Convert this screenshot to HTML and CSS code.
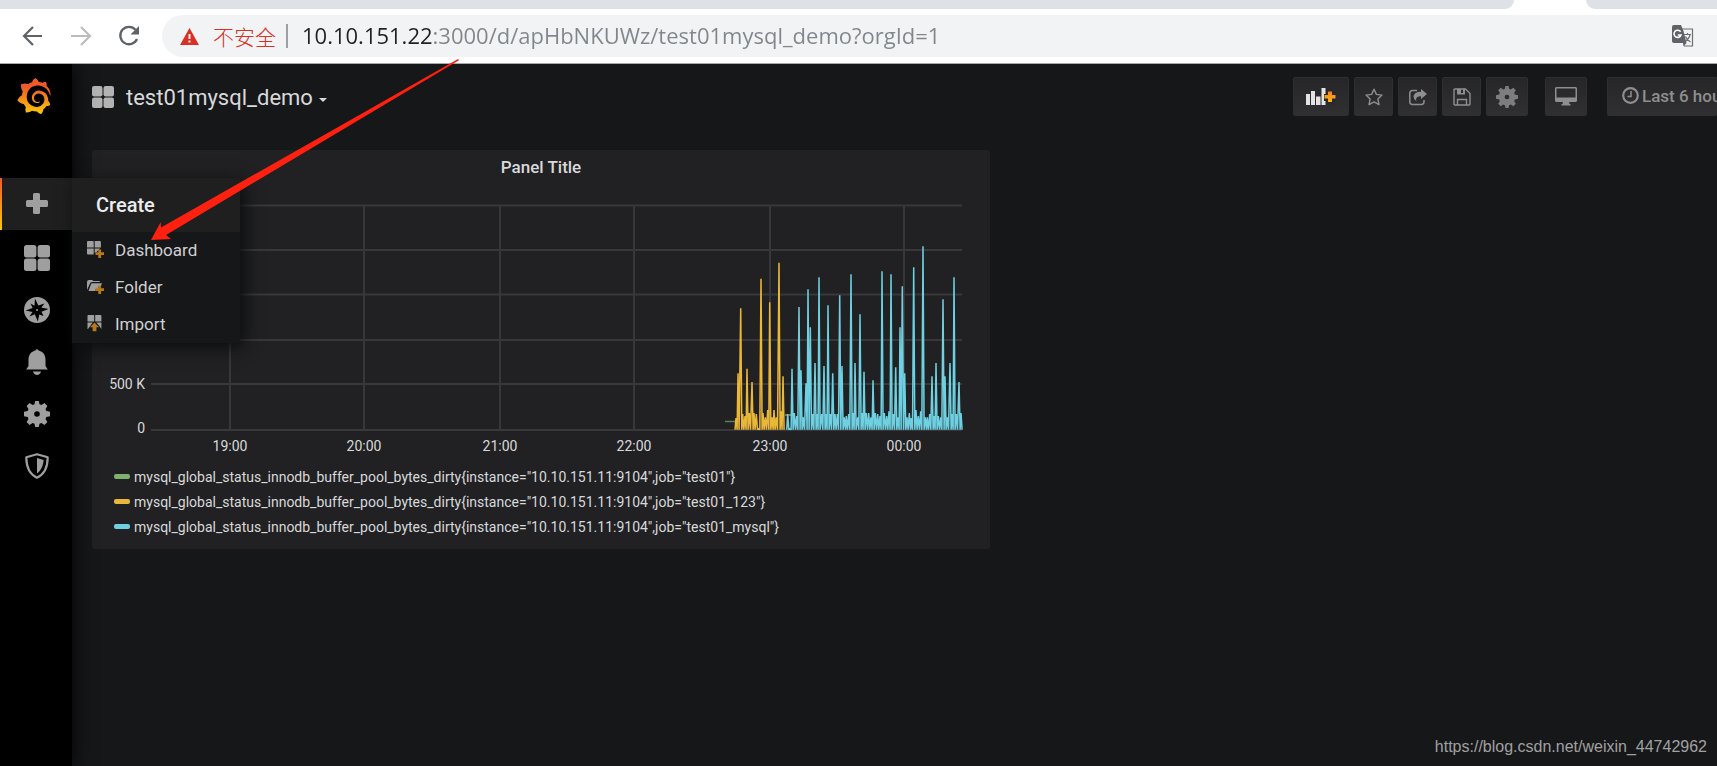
FILE: index.html
```html
<!DOCTYPE html>
<html lang="en">
<head>
<meta charset="utf-8">
<title>test01mysql_demo - Grafana</title>
<link rel="stylesheet" href="styles.css">
</head>
<body>
<svg class="defs" width="0" height="0" aria-hidden="true">
  <defs>
    <linearGradient id="sun" x1="0" y1="0" x2="0" y2="1"><stop offset="0" stop-color="#f05a28"/><stop offset="0.25" stop-color="#f05a28"/><stop offset="1" stop-color="#fbca0a"/></linearGradient>
    <linearGradient id="plus" x1="0" y1="0" x2="0" y2="1"><stop offset="0" stop-color="#f58220"/><stop offset="1" stop-color="#f9b715"/></linearGradient>
    <symbol id="tiles" viewBox="0 0 26 26"><rect width="12.4" height="12.4" rx="2.5"/><rect x="13.6" width="12.4" height="12.4" rx="2.5"/><rect y="13.6" width="12.4" height="12.4" rx="2.5"/><rect x="13.6" y="13.6" width="12.4" height="12.4" rx="2.5"/></symbol>
    <symbol id="gear" viewBox="0 0 26 26"><path fill-rule="evenodd" d="M11.2 0h3.6l.7 3.3 1.9.8 3.1-2 2.9 2.9-1.9 3 .8 2 3.7.8v4.4l-3.7.8-.8 2 1.9 3-2.9 2.9-3.1-2-1.9.8-.7 3.3h-3.6l-.7-3.3-1.9-.8-3.1 2L2.600 21l1.900-3-.8-2L0 15.200v-4.400l3.700-.8.8-2-1.900-3 2.900-2.900 3.100 2 1.900-.8zM13 10.200a2.800 2.800 0 1 0 0 5.600 2.800 2.800 0 0 0 0-5.600z"/></symbol>
  </defs>
</svg>

<header class="browser">
  <div class="tabs"><span class="tab-left"></span><span class="tab-active"></span><span class="tab-right"></span></div>
  <div class="address-row">
    <button class="nav-btn" aria-label="Back"><svg width="22" height="22" viewBox="0 0 22 22"><path d="M20 11H2.500M11 2l-9 9 9 9" fill="none" stroke="#5f6368" stroke-width="2.200"/></svg></button>
    <button class="nav-btn" aria-label="Forward"><svg width="22" height="22" viewBox="0 0 22 22"><path d="M1 11h18.500M11 2l9 9-9 9" fill="none" stroke="#babcbe" stroke-width="2.200"/></svg></button>
    <button class="nav-btn" aria-label="Reload"><svg width="22" height="22" viewBox="0 0 22 22"><path d="M17.600 4.800A8.700 8.700 0 1 0 19 14" fill="none" stroke="#5f6368" stroke-width="2.300"/><path d="M21 1v8.500h-8.500z" fill="#5f6368"/></svg></button>
    <div class="omnibox">
      <svg class="warn" width="19" height="17" viewBox="0 0 19 17"><path d="M9.500 0 19 17H0z" fill="#d93025"/><path d="M8.500 6h2v5h-2zM8.500 12.500h2v2h-2z" fill="#f1f3f4"/></svg>
      <span class="insecure" lang="zh">不安全</span>
      <span class="divider"></span>
      <input class="url" type="text" aria-label="Address" value="10.10.151.22:3000/d/apHbNKUWz/test01mysql_demo?orgId=1">
      <button class="translate" aria-label="Translate"><svg width="22" height="22" viewBox="0 0 22 22"><path d="M9 4h11.500v17H12" fill="#f1f3f4" stroke="#6b6f73" stroke-width="1.200"/><path d="M2 0h7l2.500 6 3 12H2q-2 0-2-2V2q0-2 2-2z" fill="#5f6368"/><path d="m11 18 3.500 0-3 3.500z" fill="#5f6368"/><path d="M8.600 6.800A3.600 3.600 0 1 0 9 10H5.800" fill="none" stroke="#fff" stroke-width="1.600"/><path d="M12 9.500h7M15.500 8v1.500M18 10q-1 4-5.500 7M13.500 11.500q1 3 5 5.500" fill="none" stroke="#6b6f73" stroke-width="1.200"/></svg></button>
    </div>
  </div>
</header>

<div class="app">
  <nav class="sidebar" aria-label="Main">
    <a class="logo" href="#" aria-label="Home"><svg width="36" height="36" viewBox="0 0 24 24"><path fill="url(#sun)" d="M23.02 10.59a8.578 8.578 0 0 0-.862-3.034 8.911 8.911 0 0 0-1.789-2.445c.337-1.342-.413-2.505-.413-2.505-1.292-.08-2.113.4-2.416.62-.052-.02-.102-.044-.154-.064-.22-.089-.446-.172-.677-.247-.231-.073-.47-.14-.711-.197a9.867 9.867 0 0 0-.875-.161C14.557.753 12.94 0 12.94 0c-1.804 1.145-2.147 2.744-2.147 2.744l-.018.093c-.098.029-.2.057-.298.088-.138.042-.275.094-.413.143-.138.055-.275.107-.41.166a8.869 8.869 0 0 0-1.557.87l-.063-.029c-2.497-.955-4.716.195-4.716.195-.203 2.658.996 4.33 1.235 4.636a11.608 11.608 0 0 0-.607 2.635C1.636 12.677.953 15.014.953 15.014c1.926 2.214 4.171 2.351 4.171 2.351.003-.002.006-.002.006-.005.285.509.615.994.986 1.446.156.19.32.371.488.548-.704 2.009.099 3.68.099 3.68 2.144.08 3.553-.937 3.849-1.173a9.784 9.784 0 0 0 3.164.501h.08l.055-.003.107-.002.103-.005.003.002c1.01 1.44 2.788 1.646 2.788 1.646 1.264-1.332 1.337-2.653 1.337-2.94v-.058c0-.02-.003-.039-.003-.06.265-.187.52-.387.758-.6a7.875 7.875 0 0 0 1.415-1.7c1.43.083 2.437-.885 2.437-.885-.236-1.49-1.085-2.216-1.264-2.354l-.018-.013-.016-.013a.217.217 0 0 1-.031-.02c.008-.092.016-.18.02-.27.011-.162.016-.323.016-.48v-.253l-.005-.098-.008-.135a1.891 1.891 0 0 0-.01-.13c-.003-.042-.008-.083-.013-.125l-.016-.124-.018-.122a6.215 6.215 0 0 0-2.032-3.73 6.015 6.015 0 0 0-3.222-1.46 6.292 6.292 0 0 0-.85-.048l-.107.002h-.063l-.044.003-.104.008a4.777 4.777 0 0 0-3.335 1.695c-.332.4-.592.84-.768 1.297a4.594 4.594 0 0 0-.312 1.817l.003.091c.005.055.007.11.013.164a3.615 3.615 0 0 0 .698 1.82 3.53 3.53 0 0 0 1.827 1.282c.33.098.66.14.971.137.039 0 .078 0 .114-.002l.063-.003c.02 0 .041-.003.062-.003.034-.002.065-.007.099-.01.007 0 .018-.003.028-.003l.031-.005.06-.008a1.18 1.18 0 0 0 .112-.02c.036-.008.072-.013.109-.024a2.634 2.634 0 0 0 .914-.415c.028-.02.056-.041.085-.065a.248.248 0 0 0 .039-.35.244.244 0 0 0-.309-.06l-.078.042c-.09.044-.184.083-.283.116a2.476 2.476 0 0 1-.475.096c-.028.003-.054.006-.083.006l-.083.002c-.026 0-.054 0-.08-.002l-.102-.006h-.012l-.024.006c-.016-.003-.031-.003-.044-.006-.031-.002-.06-.007-.091-.01a2.59 2.59 0 0 1-.724-.213 2.557 2.557 0 0 1-.667-.438 2.52 2.52 0 0 1-.805-1.475 2.306 2.306 0 0 1-.029-.444l.006-.122v-.023l.002-.031c.003-.021.003-.04.005-.06a3.163 3.163 0 0 1 1.352-2.29 3.12 3.12 0 0 1 .937-.43 2.946 2.946 0 0 1 .776-.101h.06l.07.002.045.003h.026l.07.005a4.041 4.041 0 0 1 1.635.49 3.94 3.94 0 0 1 1.602 1.662 3.77 3.77 0 0 1 .397 1.414l.005.076.003.075c.002.026.002.05.002.075 0 .024.003.052 0 .07v.065l-.002.073-.008.174a6.195 6.195 0 0 1-.08.639 5.1 5.1 0 0 1-.267.927 5.31 5.31 0 0 1-.624 1.13 5.052 5.052 0 0 1-3.237 2.014 4.82 4.82 0 0 1-.649.066l-.039.003h-.287a6.607 6.607 0 0 1-1.716-.265 6.776 6.776 0 0 1-3.4-2.274 6.75 6.75 0 0 1-.746-1.15 6.616 6.616 0 0 1-.714-2.596l-.005-.083-.002-.02v-.056l-.003-.073v-.096l-.003-.104v-.07l.003-.163c.008-.22.026-.45.054-.678a8.707 8.707 0 0 1 .28-1.355c.128-.444.286-.872.473-1.277a7.04 7.04 0 0 1 1.456-2.1 5.925 5.925 0 0 1 .953-.763c.169-.111.343-.213.524-.306.089-.05.182-.091.273-.135.047-.02.093-.042.138-.062a7.177 7.177 0 0 1 .714-.267l.145-.045c.049-.015.098-.026.148-.041.098-.029.197-.052.296-.076.049-.013.1-.02.15-.033l.15-.032.151-.028.076-.013.075-.01.153-.024c.057-.01.114-.013.171-.023l.169-.021c.036-.003.073-.008.106-.01l.073-.008.036-.003.042-.002c.057-.003.114-.008.171-.01l.086-.006h.023l.037-.003.145-.007a7.999 7.999 0 0 1 1.708.125 7.917 7.917 0 0 1 2.048.68 8.253 8.253 0 0 1 1.672 1.09l.09.077.089.078c.06.052.114.107.171.159.057.052.112.106.166.16.052.055.107.107.159.164a8.671 8.671 0 0 1 1.41 1.978c.012.026.028.052.04.078l.04.078.075.156c.023.051.05.1.07.153l.065.15a8.848 8.848 0 0 1 .45 1.34.19.19 0 0 0 .201.142.186.186 0 0 0 .172-.184c.01-.246.002-.532-.024-.856z"/></svg></a>
    <div class="side-item active">
      <a class="side-link" href="#" aria-label="Create"><svg width="22" height="22" viewBox="0 0 22 22"><path d="M8.500 0h4q1.500 0 1.500 1.500V7h6.500Q22 7 22 8.500v4q0 1.500-1.500 1.500H14v5.500q0 1.500-1.500 1.500h-4Q7 21 7 19.500V14H1.500Q0 14 0 12.500v-4Q0 7 1.500 7H7V1.500Q7 0 8.500 0z"/></svg></a>
      <div class="menu">
        <a class="menu-head" href="#">Create</a>
        <ul class="menu-list">
          <li><a href="#"><svg width="17" height="17" viewBox="0 0 17 17"><path d="M1 0h5q.7 0 .7.700V6.600H0V1q0-1 1-1zM7.700 0h5.200q1 0 1 1v5.600H7.700zM0 7.600h6.700v6H1q-1 0-1-1zM7.700 7.600h5.500L10 10.500 7.700 12z"/><path d="M11.300 8.500h2.800v2.700H17V14h-2.900v2.900h-2.800V14H8.500v-2.800h2.800z" fill="#b9771c"/></svg>Dashboard</a></li>
          <li><a href="#"><svg width="17" height="17" viewBox="0 0 17 17"><path d="M0 12V4q0-2 2-2h3l1.500 1H12q1 0 1 1H5Q3.500 4 3 5.500z"/><path d="M5 5.200h10L13.500 9H11v2.500H8.500V13H1.500L4 6.200q.3-1 1-1z"/><path d="M11.300 7.500h2.800v2.700H17V13h-2.900v2.900h-2.800V13H8.500v-2.800h2.800z" fill="#b9771c"/></svg>Folder</a></li>
          <li><a href="#"><svg width="17" height="17" viewBox="0 0 17 17"><path d="M1.500 0h5q.7 0 .7.700V6.600H.500V1q0-1 1-1zM8.200 0h5.200q1 0 1 1v5.600H8.200zM.500 7.600h5.200L3.500 10.500 1 14H.500zM9.300 7.600h5.100V14L11.500 10z"/><path d="M7.500 7.500 12 12.300H9.400v4H5.600v-4H3z" fill="#b9771c"/></svg>Import</a></li>
        </ul>
      </div>
    </div>
    <div class="side-item"><a class="side-link" href="#" aria-label="Dashboards"><svg width="26" height="26"><use href="#tiles"/></svg></a></div>
    <div class="side-item"><a class="side-link" href="#" aria-label="Explore"><svg width="26" height="26" viewBox="0 0 26 26"><circle cx="13" cy="13" r="13"/><path d="M11 1.500 14.300 8.500 20.500 6.500 17.300 10.500 24.500 12 17.500 14.800 19.500 19 15.300 17.500 13.800 24.500 10.800 17.300 5.500 19.500 8.500 15 1.500 13.500 8.700 11 6.500 6.500 10.500 8.800z" fill="#000"/><circle cx="13" cy="13" r="1"/></svg></a></div>
    <div class="side-item"><a class="side-link" href="#" aria-label="Alerting"><svg width="22" height="26" viewBox="0 0 22 26"><path d="M9.300 1.500Q11-1 12.700 1.500C18 3 19.500 7 19.500 11v6l2.300 3.600H.200L2.500 17v-6C2.500 7 4 3 9.300 1.500zM6.800 22.500h8.400Q13.500 26 11 26t-4.200-3.500z"/></svg></a></div>
    <div class="side-item"><a class="side-link" href="#" aria-label="Configuration"><svg width="26" height="26"><use href="#gear"/></svg></a></div>
    <div class="side-item"><a class="side-link" href="#" aria-label="Server Admin"><svg width="24" height="26" viewBox="0 0 24 26"><path d="M12 1.200 22.700 4.300C22.700 14 19 21.500 12 24.700 5 21.500 1.300 14 1.300 4.300z" fill="none" stroke="#9f9f9f" stroke-width="2.200" stroke-linejoin="round"/><path d="M12 5v15.500c4-3 6.300-8 6.600-13.500z"/></svg></a></div>
  </nav>

  <main class="main">
    <div class="navbar">
      <button class="dash-title"><svg width="22" height="22"><use href="#tiles"/></svg><span>test01mysql_demo</span><i class="caret"></i></button>
      <div class="tools">
        <button class="tool add" aria-label="Add panel"><svg width="30" height="18" viewBox="0 0 30 18"><path d="M0 6h4v11H0zM5 3h4v14H5zM10 8.500h4.500V17H10zM15.500 0h4v17h-4z" fill="#e3e3e3"/><path d="M21 2h7v4h3v7h-3v4h-7v-4h-3V6h3z" fill="#29292b"/><path d="M22 3.500h4v3.400h3.500v3.600H26V14h-4v-3.500h-3.500V6.900H22z" fill="url(#plus)"/></svg></button>
        <button class="tool" aria-label="Star"><svg width="18" height="18" viewBox="0 0 18 18"><path d="m9 1.200 2.400 5.200 5.600.7-4.100 3.900 1.100 5.700L9 13.900l-5 2.800 1.100-5.700L1 7.100l5.600-.7z" fill="none" stroke="#8e8e8e" stroke-width="1.400" stroke-linejoin="round"/></svg></button>
        <button class="tool" aria-label="Share"><svg width="18" height="18" viewBox="0 0 18 18"><path d="M8 2.500H3.500q-2.700 0-2.700 2.700v8.600q0 2.700 2.700 2.700h8.800q2.700 0 2.700-2.700V12" fill="none" stroke="#8e8e8e" stroke-width="1.500"/><path d="M12 1l6 5-6 5V8.200Q7.500 8 7 11.500q.2 1 .7 2Q4.500 11.500 4.500 8.500 5 3.800 12 3.800z" fill="#8e8e8e"/></svg></button>
        <button class="tool" aria-label="Save"><svg width="18" height="18" viewBox="0 0 18 18"><path d="M1 2q0-1 1-1h10.500L17 5.500V16q0 1-1 1H2q-1 0-1-1zM4.500 17v-5.500h9V17" fill="none" stroke="#8e8e8e" stroke-width="1.400"/><path d="M4 1v5.500h8V1h-2v4H8V1z" fill="#8e8e8e"/></svg></button>
        <button class="tool wide" aria-label="Settings"><svg width="22" height="22" fill="#7d7d7d"><use href="#gear"/></svg></button>
        <button class="tool wide apart" aria-label="Cycle view mode"><svg width="22" height="19" viewBox="0 0 22 19"><path d="M1.500 0h19Q22 0 22 1.500v12q0 1.500-1.500 1.500H14l.5 2h1v1.500h-9V17h1l.5-2H1.500Q0 15 0 13.500v-12Q0 0 1.500 0zm0 1.500v9h19v-9z" fill="#8e8e8e" fill-rule="evenodd"/></svg></button>
        <button class="time"><svg width="17" height="17" viewBox="0 0 17 17"><circle cx="8.500" cy="8.500" r="7.300" fill="none" stroke="#8e8e8e" stroke-width="2.200"/><path d="M9 4v5.500H5.500" fill="none" stroke="#8e8e8e" stroke-width="1.500"/></svg><span>Last 6 hours</span></button>
      </div>
    </div>

    <div class="grid">
      <section class="panel">
        <h2 class="panel-title">Panel Title</h2>
        <svg class="chart" viewBox="0 0 898 272" role="img" aria-label="Buffer pool bytes dirty">
          <g class="grid-lines">
            <path d="M59 15.500H870M59 60H870M59 104.500H870M59 150H870M59 194H870M59 240H870"/>
            <path d="M138 15V240M272 15V240M408 15V240M542 15V240M678 15V240M812 15V240"/>
          </g>
          <g id="series"></g>
          <g class="axis-text">
            <text x="53" y="199" text-anchor="end">500 K</text><text x="53" y="243" text-anchor="end">0</text>
            <g text-anchor="middle"><text x="138" y="261">19:00</text><text x="272" y="261">20:00</text><text x="408" y="261">21:00</text><text x="542" y="261">22:00</text><text x="678" y="261">23:00</text><text x="812" y="261">00:00</text></g>
          </g>
        </svg>
        <ul class="legend">
          <li><i class="swatch green"></i>mysql_global_status_innodb_buffer_pool_bytes_dirty{instance="10.10.151.11:9104",job="test01"}</li>
          <li><i class="swatch yellow"></i>mysql_global_status_innodb_buffer_pool_bytes_dirty{instance="10.10.151.11:9104",job="test01_123"}</li>
          <li><i class="swatch blue"></i>mysql_global_status_innodb_buffer_pool_bytes_dirty{instance="10.10.151.11:9104",job="test01_mysql"}</li>
        </ul>
      </section>
    </div>
  </main>
</div>

<svg class="arrow" width="310" height="184" viewBox="0 0 310 184" aria-hidden="true"><path d="M307 0 308 1.300 15 176 20 180 0 181 9.700 163 10 168.500z" fill="#ff2010"/></svg>
<div class="watermark">https://blog.csdn.net/weixin_44742962</div>
<script src="chart.js"></script>
</body>
</html>
```

FILE: styles.css
```css
* { box-sizing: border-box; }
body {
  margin: 0;
  min-height: 100vh;
  display: flex;
  flex-direction: column;
  position: relative;
  overflow-x: hidden;
  background: #161719;
  color: #d8d9da;
  font-family: Roboto, "Liberation Sans", sans-serif;
  font-size: 15px;
}
button { border: 0; padding: 0; background: none; font: inherit; color: inherit; }
a { color: inherit; text-decoration: none; }
ul { list-style: none; margin: 0; padding: 0; }
svg { display: block; flex: none; }
.defs { position: absolute; }

/* Browser chrome */
.browser { position: relative; z-index: 3; background: #fff; border-bottom: 1px solid #a9a7aa; }
.tabs { display: flex; height: 9px; }
.tab-left { flex: 1; background: #dee1e6; border-bottom-right-radius: 9px; }
.tab-active { width: 72px; }
.tab-right { width: 131px; background: #dee1e6; border-bottom-left-radius: 9px; }
.address-row { display: flex; align-items: center; padding: 6px 0 6px 22px; }
.nav-btn { width: 22px; margin-right: 26px; }
.nav-btn:nth-child(3) { margin-right: 22px; }
.omnibox {
  flex: 1;
  display: flex;
  align-items: center;
  height: 42px;
  padding: 0 23px 0 18px;
  background: #f1f3f4;
  border-radius: 21px 0 0 21px;
}
.insecure { margin-left: 14px; color: #d93025; font: 300 21px/30px "Noto Sans CJK SC", sans-serif; }
.divider { width: 2px; height: 24px; margin: 0 14px 0 10px; background: #9aa0a6; }
.url {
  flex: 1;
  min-width: 0;
  border: 0;
  padding: 0 0 2px;
  outline: 0;
  color: #80868b;
  font: 22px/30px "Open Sans", "Noto Sans", sans-serif;
  background: linear-gradient(90deg, #202124 131px, #80868b 131px);
  -webkit-background-clip: text;
  background-clip: text;
  -webkit-text-fill-color: transparent;
}

/* App shell */
.app { flex: 1; display: flex; }
.sidebar {
  position: relative;
  z-index: 2;
  width: 72px;
  background: #000;
  box-shadow: 0 0 20px #000;
}
.logo { display: block; height: 114px; padding: 14px 0 0 16px; }
.side-item { position: relative; height: 52px; }
.side-item.active {
  margin-bottom: 2px;
  background: #1f1f20;
}
.side-item.active::before {
  content: "";
  position: absolute;
  inset: 0 auto 0 0;
  width: 2px;
  background: linear-gradient(#f05a28, #fbca0a);
}
.side-link { display: flex; align-items: center; justify-content: center; height: 100%; padding-left: 2px; fill: #9f9f9f; }
.menu {
  position: absolute;
  left: 72px;
  top: 0;
  width: 168px;
  background: #161719;
  box-shadow: 4px 4px 16px #0b0c0d;
}
.menu-head { display: block; height: 54px; padding-left: 24px; background: #1f1f20; color: #ececec; font-size: 20px; font-weight: 500; line-height: 54px; }
.menu-list a { display: flex; align-items: center; gap: 11px; height: 37px; padding: 0 0 2px 15px; color: #d0d0d0; font-size: 17px; fill: #9f9f9f; }

/* Main area */
.main { flex: 1; min-width: 0; padding-left: 20px; }
.navbar { display: flex; align-items: center; justify-content: space-between; padding: 13px 0; }
.dash-title { display: flex; align-items: center; gap: 12px; font-size: 22px; line-height: 32px; fill: #b3b3b3; }
.dash-title span { padding-top: 2px; }
.caret { margin-top: 6px; margin-left: -6px; border: 4px solid transparent; border-top-color: #d8d9da; border-bottom: 0; }
.tools { display: flex; gap: 5px; }
.tool, .time {
  display: flex;
  align-items: center;
  justify-content: center;
  width: 39px;
  height: 39px;
  border: 1px solid #2f2f32;
  border-radius: 2px;
  background: linear-gradient(#262628, #303032);
}
.tool.add { width: 56px; }
.tool.wide { width: 42px; }
.tool.apart { margin: 0 15px 0 12px; }
.time {
  width: 110px;
  justify-content: flex-start;
  gap: 3px;
  padding: 0 0 2px 14px;
  border-right: 0;
  overflow: hidden;
  white-space: nowrap;
  color: #8e8e8e;
  font-size: 17px;
  font-weight: 500;
}
.grid { display: grid; grid-template-columns: 21fr 17fr; padding-top: 21px; }
.panel { background: #212124; border-radius: 3px; padding-bottom: 10px; }
.panel-title { margin: 0; padding-top: 5px; font-size: 17px; font-weight: 500; line-height: 24px; height: 40px; text-align: center; }
.chart { width: 100%; height: auto; }
.grid-lines { fill: none; stroke: #38383b; stroke-width: 2; }
.axis-text { fill: #d8d9da; font-size: 14px; }
.legend { padding-left: 22px; padding-top: 2px; }
.legend li { display: flex; align-items: center; gap: 4px; height: 25px; font-size: 14px; white-space: nowrap; }
.swatch { width: 16px; height: 5px; border-radius: 2px; }
.green { background: #7eb26d; }
.yellow { background: #eab839; }
.blue { background: #6ed0e0; }

/* Overlays */
.arrow { position: absolute; left: 151px; top: 59px; z-index: 4; pointer-events: none; }
.watermark { position: absolute; right: 10px; bottom: 9px; color: #a0a1a2; font: 16px/20px "Liberation Sans", sans-serif; }
```

FILE: chart.js
```js
// Sample peaks as [x, y], in thirds of a chart unit; x counts from 608 units.
const yellow = [[108,684],[114,550],[122,355],[128,672],[135,678],[141,536],[148,669],[156,576],[162,669],[169,672],[176,716],[183,266],[189,669],[196,682],[203,660],[209,337],[216,682],[222,660],[229,682],[237,218],[243,664],[249,559]];
const blue = [[263,672],[270,716],[276,536],[283,669],[290,678],[297,351],[303,541],[310,682],[318,580],[324,298],[331,412],[338,672],[345,519],[351,672],[357,262],[365,672],[372,528],[378,672],[384,346],[391,672],[398,550],[405,672],[412,672],[419,316],[426,528],[433,682],[439,678],[446,672],[453,253],[459,669],[465,519],[473,682],[480,373],[486,669],[492,545],[499,669],[506,669],[513,682],[519,571],[526,669],[533,672],[540,678],[546,244],[553,669],[560,678],[567,664],[573,253],[580,672],[587,532],[594,682],[600,412],[607,289],[614,550],[621,682],[628,669],[634,684],[641,232],[648,660],[655,678],[662,664],[669,169],[676,682],[682,682],[689,672],[696,559],[702,678],[708,519],[715,678],[722,682],[729,328],[735,559],[742,682],[750,519],[756,672],[762,262],[769,672],[777,576],[783,669]];
const base = 719;

function add(d, color, fill) {
  const path = document.createElementNS("http://www.w3.org/2000/svg", "path");
  path.setAttribute("d", d);
  path.setAttribute("stroke", color);
  path.setAttribute("stroke-width", "1.5");
  path.setAttribute("stroke-linejoin", "bevel");
  path.setAttribute("fill", fill ? color : "none");
  path.setAttribute("fill-opacity", "0.1");
  document.getElementById("series").append(path);
}

function spikes(points) {
  const at = (x, y) => (608 + x / 3).toFixed(1) + " " + (y / 3).toFixed(1);
  let d = "M" + at(points[0][0] - 3, base);
  for (const [x, y] of points) d += "L" + at(x, y) + "L" + at(x + 3.4, base);
  return d;
}

add("M633 231.500H643", "#5d8052", false);
add("M693 225H703", "#8a9a50", false);
add(spikes(yellow), "#eab839", true);
add(spikes(blue), "#6ed0e0", true);
```
